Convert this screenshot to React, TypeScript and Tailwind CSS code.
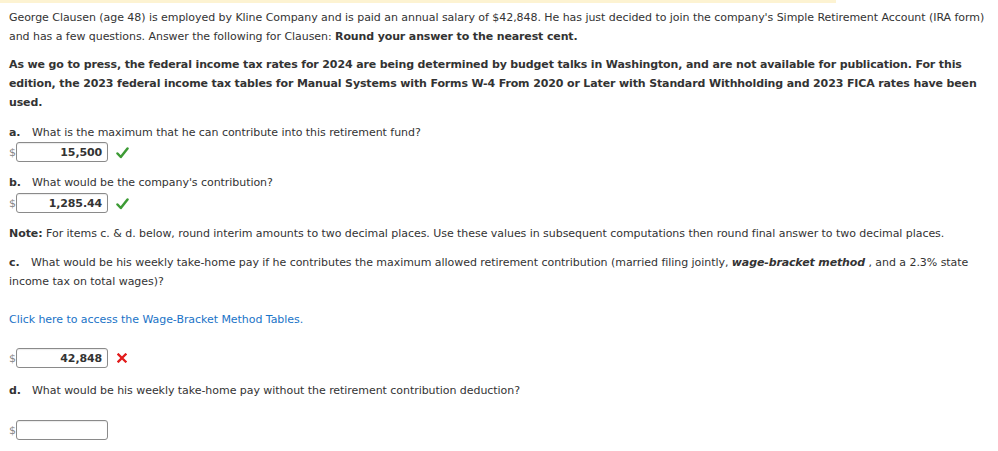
import React from "react";

function Check() {
  return (
    <svg width="13" height="12" viewBox="0 0 13 12" className="ml-[8px] mt-[2px]">
      <path d="M1.5 6.5 L4.8 10 L11.5 1.5" fill="none" stroke="#3d9b35" strokeWidth="2.5" strokeLinecap="round" strokeLinejoin="round" />
    </svg>
  );
}

function Cross() {
  return (
    <svg width="10" height="10" viewBox="0 0 10 10" className="ml-[9px]">
      <path d="M1.5 1.5 L8.5 8.5 M8.5 1.5 L1.5 8.5" fill="none" stroke="#e21b1b" strokeWidth="2.3" strokeLinecap="square" />
    </svg>
  );
}

function Answer({ value, mark }: { value: string; mark?: "ok" | "bad" }) {
  return (
    <div className="flex h-[20px] items-center">
      <span className="w-[7px] text-[11px] leading-none text-[#888]">$</span>
      <div className="flex h-[20px] w-[92px] items-center justify-end rounded-[3px] border border-[#8a8a8a] pr-[5px] text-[11px] font-bold tracking-[-0.13px] text-[#333] shadow-[inset_0_1px_1px_rgba(0,0,0,0.08)]">
        {value}
      </div>
      {mark === "ok" && <Check />}
      {mark === "bad" && <Cross />}
    </div>
  );
}

export default function App() {
  return (
    <div className="min-h-[451px] w-[998px] bg-white text-[11px] leading-[19px] tracking-[-0.05px] text-[#333]" style={{ fontFamily: '"DejaVu Sans", Verdana, sans-serif' }}>
      <div className="h-[3px] w-[836px] bg-[#fdf3d2]" />
      <div className="pl-[9px] pr-[4px]">
        <p className="mt-[5px]">
          George Clausen (age 48) is employed by Kline Company and is paid an annual salary of $42,848. He has just decided to join the company's Simple Retirement Account (IRA form)
          <br />
          and has a few questions. Answer the following for Clausen: <b className="tracking-[-0.13px]">Round your answer to the nearest cent.</b>
        </p>
        <p className="mt-[9px] font-bold tracking-[-0.13px]">
          As we go to press, the federal income tax rates for 2024 are being determined by budget talks in Washington, and are not available for publication. For this
          <br />
          edition, the 2023 federal income tax tables for Manual Systems with Forms W-4 From 2020 or Later with Standard Withholding and 2023 FICA rates have been
          <br />
          used.
        </p>

        <p className="mt-[11px]">
          <b className="inline-block w-[23px]">a.</b>What is the maximum that he can contribute into this retirement fund?
        </p>
        <Answer value="15,500" mark="ok" />

        <p className="mt-[11px]">
          <b className="inline-block w-[23px]">b.</b>What would be the company's contribution?
        </p>
        <div className="mt-[1px]">
          <Answer value="1,285.44" mark="ok" />
        </div>

        <p className="mt-[11px]">
          <b>Note:</b> For items c. &amp; d. below, round interim amounts to two decimal places. Use these values in subsequent computations then round final answer to two decimal places.
        </p>

        <p className="mt-[10px]">
          <b className="inline-block w-[22px]">c.</b>What would be his weekly take-home pay if he contributes the maximum allowed retirement contribution (married filing jointly, <b className="tracking-[-0.13px]"><i>wage-bracket method</i></b> , and a 2.3% state
          <br />
          income tax on total wages)?
        </p>

        <p className="mt-[19px]">
          <a className="text-[#1a73c7]">Click here to access the Wage-Bracket Method Tables.</a>
        </p>

        <div className="mt-[19px]">
          <Answer value="42,848" mark="bad" />
        </div>

        <p className="mt-[13px]">
          <b className="inline-block w-[23px]">d.</b>What would be his weekly take-home pay without the retirement contribution deduction?
        </p>

        <div className="mt-[20px]">
          <Answer value="" />
        </div>
      </div>
    </div>
  );
}
